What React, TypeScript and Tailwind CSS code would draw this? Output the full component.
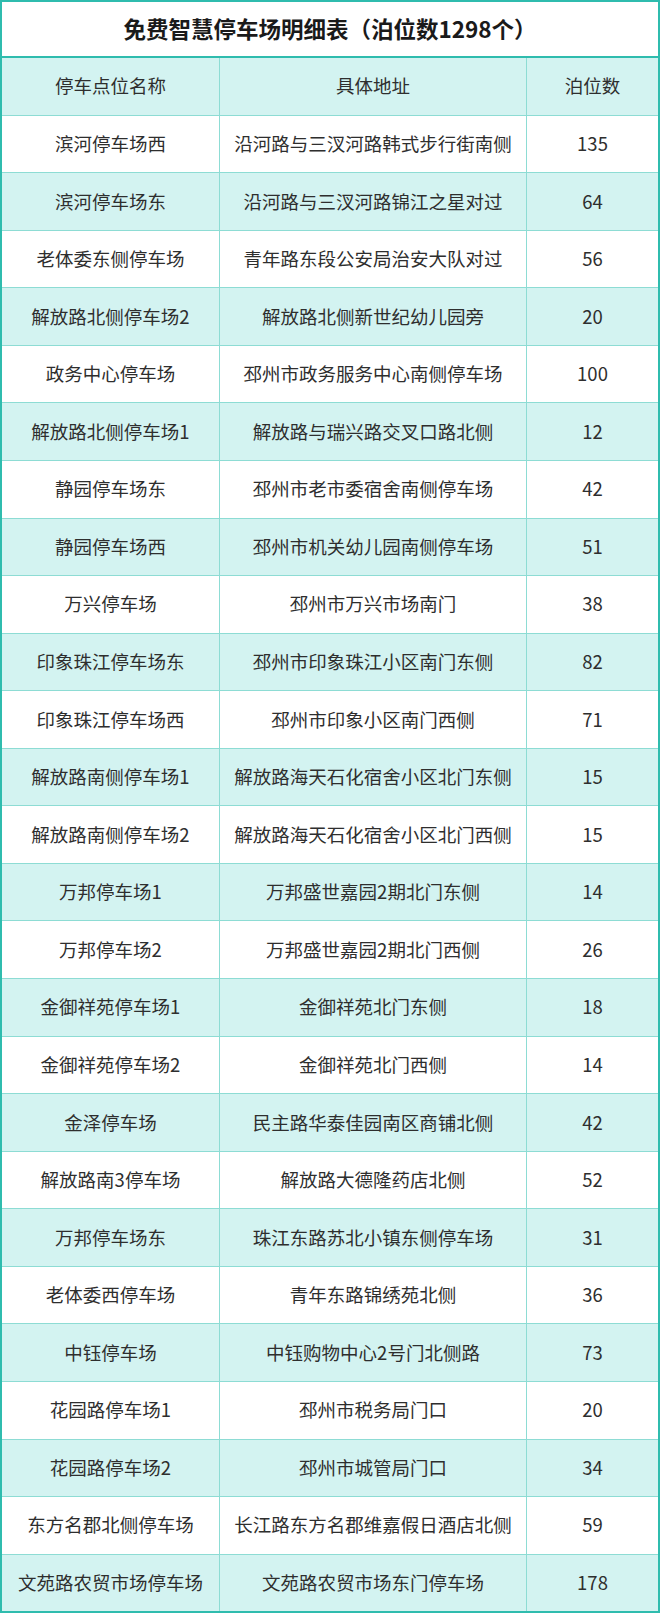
import React from "react";

const rows: [string, string, string][] = [
  ["滨河停车场西", "沿河路与三汊河路韩式步行街南侧", "135"],
  ["滨河停车场东", "沿河路与三汊河路锦江之星对过", "64"],
  ["老体委东侧停车场", "青年路东段公安局治安大队对过", "56"],
  ["解放路北侧停车场2", "解放路北侧新世纪幼儿园旁", "20"],
  ["政务中心停车场", "邳州市政务服务中心南侧停车场", "100"],
  ["解放路北侧停车场1", "解放路与瑞兴路交叉口路北侧", "12"],
  ["静园停车场东", "邳州市老市委宿舍南侧停车场", "42"],
  ["静园停车场西", "邳州市机关幼儿园南侧停车场", "51"],
  ["万兴停车场", "邳州市万兴市场南门", "38"],
  ["印象珠江停车场东", "邳州市印象珠江小区南门东侧", "82"],
  ["印象珠江停车场西", "邳州市印象小区南门西侧", "71"],
  ["解放路南侧停车场1", "解放路海天石化宿舍小区北门东侧", "15"],
  ["解放路南侧停车场2", "解放路海天石化宿舍小区北门西侧", "15"],
  ["万邦停车场1", "万邦盛世嘉园2期北门东侧", "14"],
  ["万邦停车场2", "万邦盛世嘉园2期北门西侧", "26"],
  ["金御祥苑停车场1", "金御祥苑北门东侧", "18"],
  ["金御祥苑停车场2", "金御祥苑北门西侧", "14"],
  ["金泽停车场", "民主路华泰佳园南区商铺北侧", "42"],
  ["解放路南3停车场", "解放路大德隆药店北侧", "52"],
  ["万邦停车场东", "珠江东路苏北小镇东侧停车场", "31"],
  ["老体委西停车场", "青年东路锦绣苑北侧", "36"],
  ["中钰停车场", "中钰购物中心2号门北侧路", "73"],
  ["花园路停车场1", "邳州市税务局门口", "20"],
  ["花园路停车场2", "邳州市城管局门口", "34"],
  ["东方名郡北侧停车场", "长江路东方名郡维嘉假日酒店北侧", "59"],
  ["文苑路农贸市场停车场", "文苑路农贸市场东门停车场", "178"],
];

const font = {
  fontFamily: '"Noto Sans CJK SC", "Noto Sans", sans-serif',
};

function Row({ cells, cyan, first }: { cells: [string, string, string]; cyan: boolean; first?: boolean }) {
  return (
    <div
      className={`flex flex-1 ${cyan ? "bg-[#d3f3f1]" : "bg-white"} ${first ? "" : "border-t border-[#8ddcd4]"}`}
    >
      <div className="w-[218px] flex items-center justify-center border-r border-[#8ddcd4]">{cells[0]}</div>
      <div className="w-[307px] flex items-center justify-center border-r border-[#8ddcd4]">{cells[1]}</div>
      <div className="flex-1 flex items-center justify-center">{cells[2]}</div>
    </div>
  );
}

export default function App() {
  return (
    <div
      className="w-[660px] h-[1613px] flex flex-col border-2 border-[#2fbcae] bg-white text-[#2e2e2e] text-[18.5px]"
      style={font}
    >
      <div className="h-[56px] shrink-0 flex items-center justify-center border-b-2 border-[#2fbcae] bg-white font-bold text-[22.5px] text-[#1a1a1a]">
        免费智慧停车场明细表（泊位数1298个）
      </div>
      <Row cells={["停车点位名称", "具体地址", "泊位数"]} cyan first />
      {rows.map((r, i) => (
        <Row key={i} cells={r} cyan={i % 2 === 1} />
      ))}
    </div>
  );
}
